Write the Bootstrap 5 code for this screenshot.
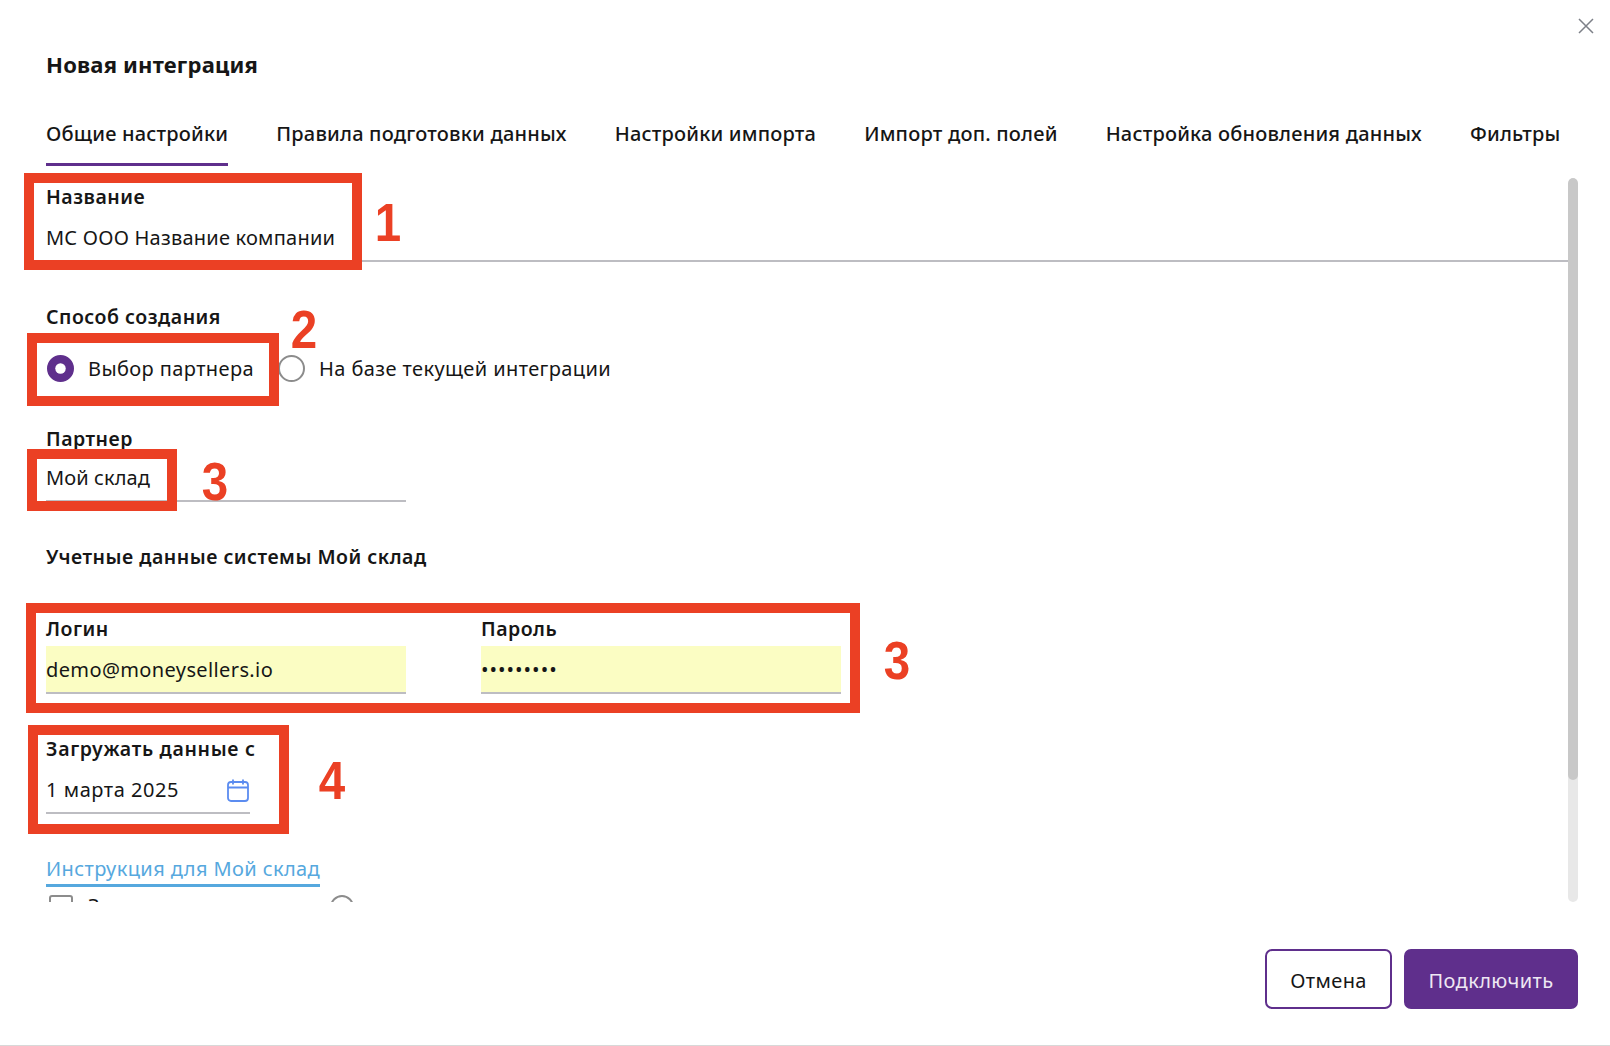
<!DOCTYPE html>
<html lang="ru">
<head>
<meta charset="utf-8">
<title>Новая интеграция</title>
<link href="https://cdn.jsdelivr.net/npm/bootstrap@5.3.0/dist/css/bootstrap.min.css" rel="stylesheet">
<style>
html, body { height: 100%; }
body { font-family: "Noto Sans", "Liberation Sans", sans-serif; color: #161616; background: #fff; overflow: hidden; font-size: 20px; letter-spacing: .4px; }
.sheet { height: 1046px; border-bottom: 1px solid #d8d8d8; display: flex; flex-direction: column; position: relative; }
.sheet-title { font-size: 22px; font-weight: 700; line-height: 30px; margin: 49px 0 0 46px; color: #161616; letter-spacing: .2px; }
.close-x { position: absolute; left: 1578px; top: 18px; width: 16px; height: 16px; }
.tabbar { margin: 40px 0 0 46px; gap: 48px; flex-wrap: nowrap; height: 47px; }
.tabbar .nav-link { padding: 0; height: 47px; line-height: 30px; font-size: 20px; font-weight: 500; color: #161616; white-space: nowrap; border-bottom: 3px solid transparent; letter-spacing: .2px; }
.tabbar .nav-link.active { border-bottom-color: #5f2f8c; color: #161616; }
.scroller { height: 736px; padding: 18px 0 0 46px; overflow: hidden; width: 1568px; flex: none; }
.fld-label { display: block; font-size: 19.5px; font-weight: 600; line-height: 26px; margin: 0; color: #161616; letter-spacing: .5px; }
.fld-input.form-control { display: block; border: 0; border-bottom: 2px solid #bdbdc2; border-radius: 0; padding: 0; background: transparent; font-size: 20px; color: #161616; box-shadow: none; height: 48px; letter-spacing: .22px; }
.fld-input.filled.form-control { background: #fbfdc3; margin-top: 4px; letter-spacing: .38px; }
.fld-input.pass-dots.form-control { letter-spacing: 1px; }
.fld-input.date-val.form-control { letter-spacing: .55px; }
.fld-name { margin-top: 4px; }
.block-method { margin-top: 42px; }
.radio-row { margin-top: 19px; height: 38px; margin-left: 1px; gap: 24px; }
.radio-item.form-check { padding: 0; margin: 0; min-height: 0; gap: 14px; }
.radio-item .form-check-input { float: none; margin: 0; width: 27px; height: 27px; flex: none; border: 2px solid #8c8c8c; box-shadow: none; }
.radio-item .form-check-input:checked { background-color: #5f2f8c; border-color: #5f2f8c; background-size: 21px; background-image: url("data:image/svg+xml,%3csvg xmlns='http://www.w3.org/2000/svg' viewBox='-4 -4 8 8'%3e%3ccircle r='2' fill='%23fff'/%3e%3c/svg%3e"); }
.radio-item .form-check-label { line-height: 30px; padding-top: 2px; }
.block-partner { margin-top: 39px; width: 360px; }
.fld-partner { margin-top: 2px; }
.fld-input.fld-partner.form-control { letter-spacing: .1px; }
.creds-title { margin-top: 42px; }
.creds-row { margin-top: 46px; gap: 75px; }
.creds-col { width: 360px; }
.block-date { margin-top: 42px; width: 204px; }
.block-date .fld-label { letter-spacing: .68px; }
.date-wrap { position: relative; margin-top: 4px; }
.cal-icon { position: absolute; left: 181px; top: 13px; width: 22px; height: 23px; }
.guide-link { display: inline-block; margin-top: 40px; line-height: 30px; color: #56a8de; border-bottom: 3px solid #56a8de; text-decoration: none; }
.check-row { margin-top: 8px; margin-left: 3px; height: 30px; }
.check-row .form-check-input { float: none; margin: 0; width: 24px; height: 24px; flex: none; border: 2px solid #8c8c8c; border-radius: 3px; }
.check-text { margin-left: 15px; width: 242px; line-height: 22px; white-space: nowrap; overflow: hidden; flex: none; }
.help-ring { width: 24px; height: 24px; border: 2px solid #8c8c8c; border-radius: 50%; flex: none; }
.thumb-track { position: absolute; left: 1568px; top: 178px; width: 10px; height: 724px; background: #e8e8e8; border-radius: 5px; overflow: hidden; }
.thumb-bar { height: 602px; background: #c8c8c8; border-radius: 5px; }
.foot { margin-top: 47px; padding-right: 32px; gap: 12px; }
.foot .btn { height: 60px; border-radius: 7px; font-size: 20px; padding: 3px 0 0; letter-spacing: .4px; }
.btn-cancel.btn { width: 127px; border: 2px solid #5f2f8c; background: #fff; color: #161616; }
.btn-connect.btn { width: 174px; border: 2px solid #5f2f8c; background: #5f2f8c; color: #eee8f3; }
.mark-box { position: absolute; border: 10px solid #eb4024; }
.mark-num { position: absolute; font-family: "Liberation Sans", Arial, sans-serif; font-weight: 700; font-size: 54px; line-height: 54px; color: #eb4024; letter-spacing: 0; transform: scaleX(.88); }
.b1 { left: 24px; top: 173px; width: 338px; height: 97px; }
.b2 { left: 27px; top: 333px; width: 252px; height: 73px; }
.b3 { left: 27px; top: 449px; width: 150px; height: 62px; }
.b4 { left: 26px; top: 603px; width: 834px; height: 110px; }
.b5 { left: 28px; top: 725px; width: 261px; height: 109px; }
.n1 { left: 373px; top: 195px; }
.n2 { left: 289px; top: 302px; }
.n3 { left: 200px; top: 454px; }
.n4 { left: 882px; top: 633px; }
.n5 { left: 317px; top: 753px; }
</style>
</head>
<body>
<div class="sheet">
  <h1 class="sheet-title">Новая интеграция</h1>
  <svg class="close-x" viewBox="0 0 16 16" fill="none" stroke="#7d8088" stroke-width="1.5"><path d="M1 1l14 14M15 1L1 15"/></svg>
  <ul class="nav tabbar">
    <li class="nav-item"><a class="nav-link active" href="#">Общие настройки</a></li>
    <li class="nav-item"><a class="nav-link" href="#">Правила подготовки данных</a></li>
    <li class="nav-item"><a class="nav-link" href="#">Настройки импорта</a></li>
    <li class="nav-item"><a class="nav-link" href="#">Импорт доп. полей</a></li>
    <li class="nav-item"><a class="nav-link" href="#">Настройка обновления данных</a></li>
    <li class="nav-item"><a class="nav-link" href="#">Фильтры</a></li>
  </ul>

  <div class="scroller">
    <div>
      <label class="fld-label" for="f-name">Название</label>
      <input id="f-name" class="form-control fld-input fld-name" type="text" value="МС ООО Название компании">
    </div>

    <div class="block-method">
      <div class="fld-label">Способ создания</div>
      <div class="d-flex align-items-center radio-row">
        <div class="form-check d-flex align-items-center radio-item">
          <input class="form-check-input" type="radio" name="how" id="r1" checked>
          <label class="form-check-label" for="r1">Выбор партнера</label>
        </div>
        <div class="form-check d-flex align-items-center radio-item">
          <input class="form-check-input" type="radio" name="how" id="r2">
          <label class="form-check-label" for="r2">На базе текущей интеграции</label>
        </div>
      </div>
    </div>

    <div class="block-partner">
      <label class="fld-label" for="f-partner">Партнер</label>
      <input id="f-partner" class="form-control fld-input fld-partner" type="text" value="Мой склад">
    </div>

    <div class="fld-label creds-title">Учетные данные системы Мой склад</div>

    <div class="d-flex creds-row">
      <div class="creds-col">
        <label class="fld-label" for="f-login">Логин</label>
        <input id="f-login" class="form-control fld-input filled" type="text" value="demo@moneysellers.io">
      </div>
      <div class="creds-col">
        <label class="fld-label" for="f-pass">Пароль</label>
        <input id="f-pass" class="form-control fld-input filled pass-dots" type="password" value="123456789">
      </div>
    </div>

    <div class="block-date">
      <label class="fld-label text-nowrap" for="f-date">Загружать данные с</label>
      <div class="date-wrap">
        <input id="f-date" class="form-control fld-input date-val" type="text" value="1 марта 2025">
        <svg class="cal-icon" viewBox="0 0 22 23" fill="none" stroke="#5b8cf0" stroke-width="1.8"><rect x="1" y="3" width="20" height="19" rx="3"/><path d="M1 8.5h20M6 .5v5M16 .5v5"/></svg>
      </div>
    </div>

    <a class="guide-link" href="#">Инструкция для Мой склад</a>

    <div class="d-flex align-items-start check-row">
      <input class="form-check-input" type="checkbox" id="c1">
      <label class="check-text" for="c1">Загружать заказы за период</label>
      <span class="help-ring"></span>
    </div>
  </div>

  <div class="thumb-track"><div class="thumb-bar"></div></div>

  <div class="d-flex justify-content-end foot">
    <button class="btn btn-cancel" type="button">Отмена</button>
    <button class="btn btn-connect" type="button">Подключить</button>
  </div>

  <div class="mark-box b1"></div><div class="mark-num n1">1</div>
  <div class="mark-box b2"></div><div class="mark-num n2">2</div>
  <div class="mark-box b3"></div><div class="mark-num n3">3</div>
  <div class="mark-box b4"></div><div class="mark-num n4">3</div>
  <div class="mark-box b5"></div><div class="mark-num n5">4</div>
</div>
<script src="https://cdn.jsdelivr.net/npm/bootstrap@5.3.0/dist/js/bootstrap.bundle.min.js"></script>
</body>
</html>
